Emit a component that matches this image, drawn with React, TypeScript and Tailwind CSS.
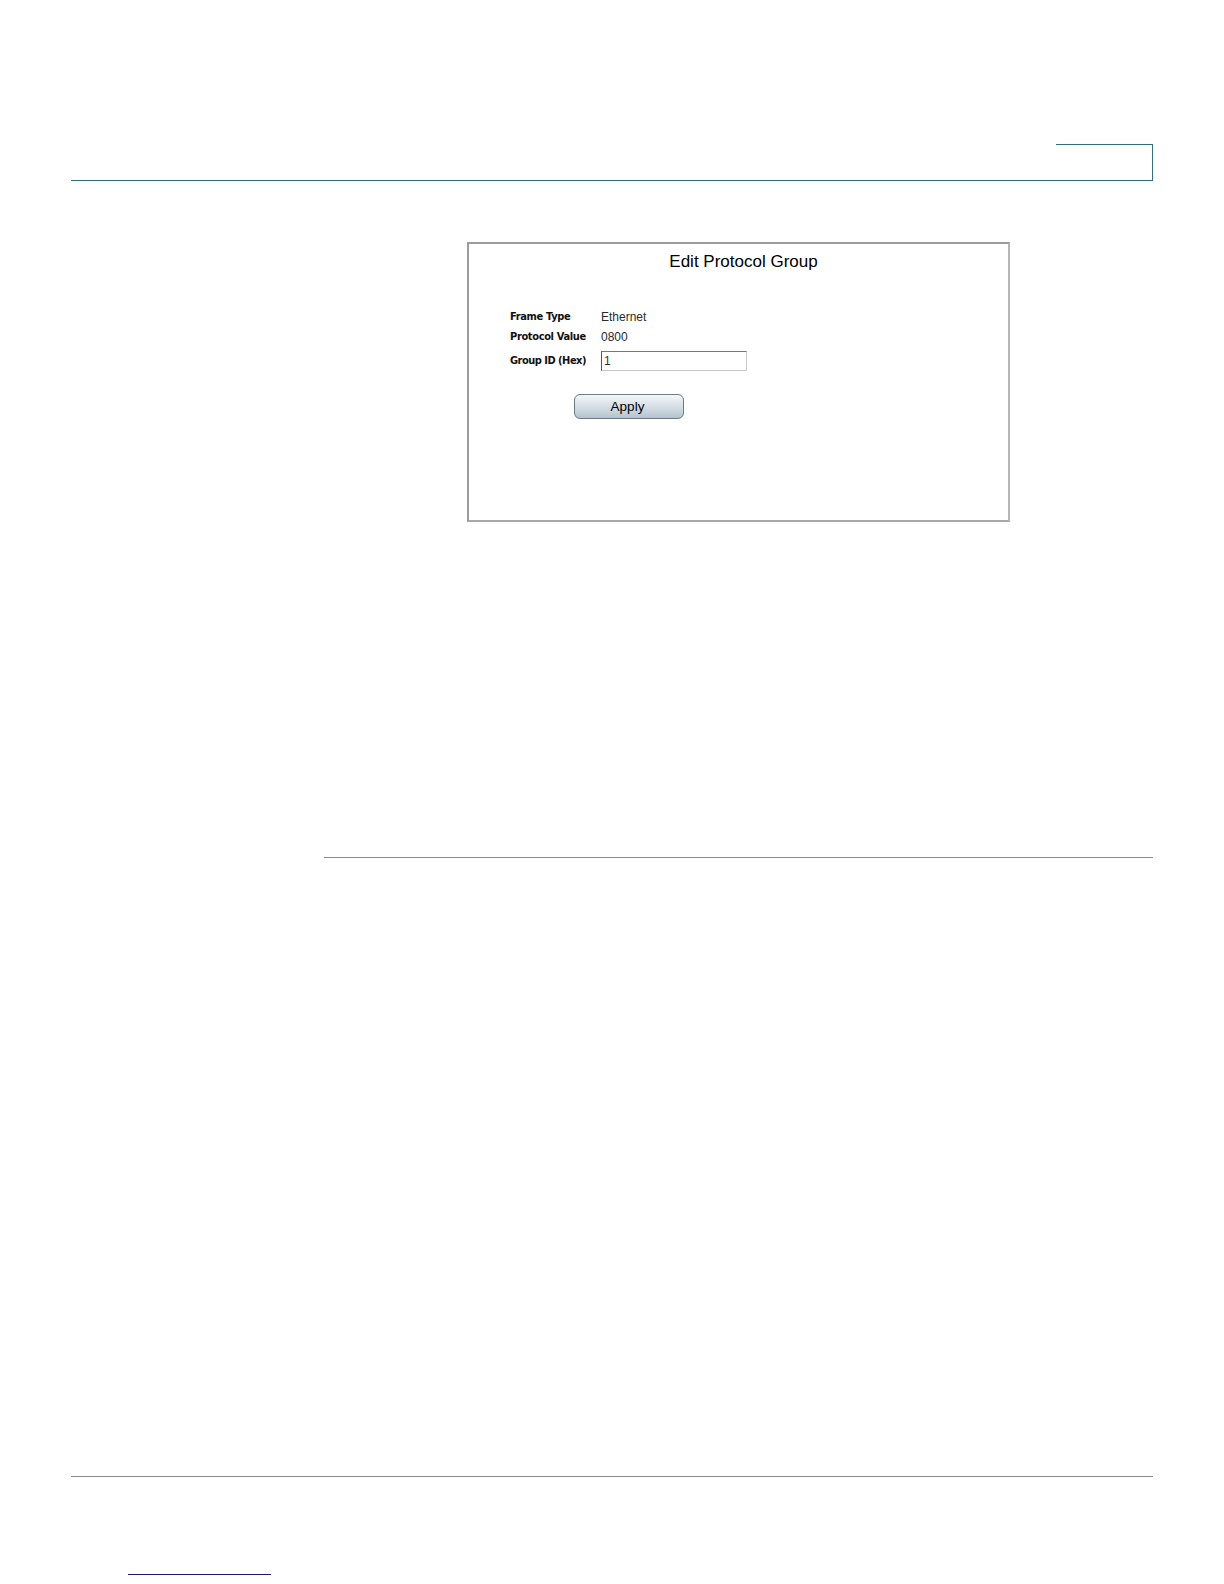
export default function App() {
  const rows = [
    { label: 'Frame Type', value: 'Ethernet' },
    { label: 'Protocol Value', value: '0800' },
  ];

  return (
    <div className="w-[1224px] h-[1584px] bg-white flex flex-col font-['Liberation_Sans',Arial,sans-serif] text-black">
      {/* Chapter header rule with tab box */}
      <div className="mt-[144px] ml-[71px] w-[1082px] h-[37px] border-b border-[#2f6f7c] flex justify-end">
        <div className="w-[97px] h-full border-t border-r border-[#2f6f7c]" />
      </div>

      {/* Screenshot of the dialog */}
      <div className="mt-[61px] ml-[467px] w-[543px] h-[280px] border-2 border-t-[#9c9c9c] border-l-[#9c9c9c] border-r-[#b5b5b5] border-b-[#a8a8a8] bg-white flex flex-col">
        <div className="pt-[8px] pl-[10px] h-[28px] text-center text-[17px] leading-[20px]">
          Edit Protocol Group
        </div>

        <div className="mt-[35px] pl-[41px] flex flex-col">
          {rows.map((row) => (
            <div key={row.label} className="flex items-center h-[20px]">
              <div className="w-[91px] text-[9.9px] font-bold font-['DejaVu_Sans',sans-serif] tracking-[-0.35px] text-[#111]">
                {row.label}
              </div>
              <div className="text-[12px] text-[#2a2a2a]">{row.value}</div>
            </div>
          ))}
          <div className="flex items-center h-[28px]">
            <div className="w-[91px] text-[9.9px] font-bold font-['DejaVu_Sans',sans-serif] tracking-[-0.5px] text-[#111]">
              Group ID (Hex)
            </div>
            <input
              defaultValue="1"
              className="w-[146px] h-[20px] px-[2px] text-[12px] leading-none text-[#333] bg-white border border-t-[#777] border-l-[#555] border-r-[#c8c8c8] border-b-[#c8c8c8] outline-none"
            />
          </div>
        </div>

        <div className="mt-[19px] ml-[105px]">
          <button className="w-[110px] h-[25px] rounded-[6px] border border-[#6b7a84] bg-gradient-to-b from-[#f4f7f9] via-[#d6dfe5] to-[#b5c3cc] text-[13.5px] leading-none text-black pr-[3px]">
            Apply
          </button>
        </div>
      </div>

      {/* Section rule */}
      <div className="mt-[335px] ml-[324px] w-[829px] h-px bg-[#8a8a8a]" />

      {/* Footer rule */}
      <div className="mt-[618px] ml-[71px] w-[1082px] h-px bg-[#8a8a8a]" />

      {/* Link underline */}
      <div className="mt-[97px] ml-[128px] w-[143px] h-px bg-[#1c1c6b]" />
    </div>
  );
}
